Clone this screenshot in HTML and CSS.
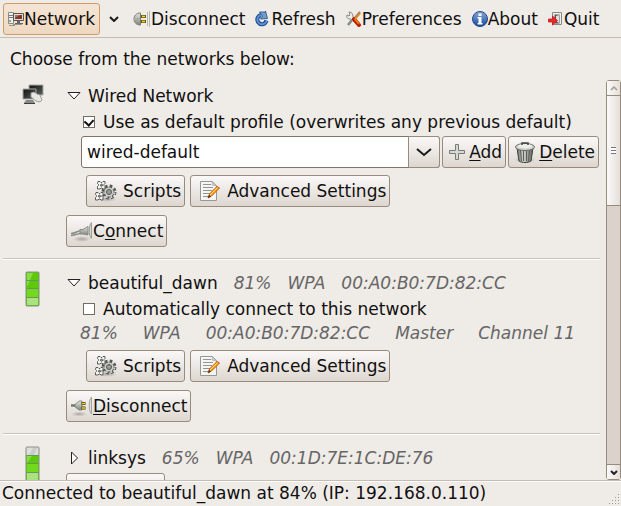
FILE: index.html
```html
<!DOCTYPE html>
<html lang="en">
<head>
    <meta charset="UTF-8">
    <meta name="viewport" content="width=device-width, initial-scale=1.0">
    <title>Network Manager</title>
    <link rel="stylesheet" href="styles.css">
</head>
<body>
    <!-- shared icons -->
    <svg class="defs" width="0" height="0" aria-hidden="true">
        <defs>
            <linearGradient id="metal" x1="0" y1="0" x2="0" y2="1">
                <stop offset="0" stop-color="#e2e4e0"/><stop offset="1" stop-color="#80857f"/>
            </linearGradient>
            <linearGradient id="blue" x1="0" y1="0" x2="0" y2="1">
                <stop offset="0" stop-color="#86a9dc"/><stop offset="1" stop-color="#174a9b"/>
            </linearGradient>
            <linearGradient id="screen" x1="0" y1="0" x2="1" y2="1">
                <stop offset="0" stop-color="#111"/><stop offset="1" stop-color="#59615a"/>
            </linearGradient>
            <linearGradient id="can" x1="0" y1="0" x2="1" y2="0">
                <stop offset="0" stop-color="#6c6f6a"/><stop offset=".4" stop-color="#d3d7cf"/><stop offset="1" stop-color="#5d605b"/>
            </linearGradient>
            <radialGradient id="shadow">
                <stop offset="0" stop-color="#000" stop-opacity=".25"/><stop offset="1" stop-color="#000" stop-opacity="0"/>
            </radialGradient>
            <symbol id="gears" viewBox="0 0 22 22">
                <ellipse cx="12" cy="19" rx="10" ry="3" fill="url(#shadow)"/>
                <circle cx="14" cy="12" r="6" fill="none" stroke="#555753" stroke-width="3" stroke-dasharray="2.6 2.1"/>
                <circle cx="14" cy="12" r="5.500" fill="#555753"/>
                <circle cx="14" cy="12" r="5.500" fill="none" stroke="#d3d6d0" stroke-width="2" stroke-dasharray="1.6 3.1" stroke-dashoffset="-.5"/>
                <circle cx="14" cy="12" r="4.600" fill="#cdd0ca"/>
                <circle cx="14" cy="12" r="2.500" fill="#9a9d97" stroke="#555753"/>
                <g id="cog">
                    <path d="M3 1.500h2l1 1h1l1-1h2v2l-1 1v1l1 1v2.500H8l-1-1H6l-1 1H2.500V6.500l1-1v-1l-1-1z" fill="#f3f4f2" stroke="#5a5c57"/>
                    <circle cx="6.500" cy="5.200" r="1" fill="#aaa" stroke="#4c4e49"/>
                </g>
                <use href="#cog" x="-2" y="11"/>
            </symbol>
            <symbol id="edit" viewBox="0 0 22 22">
                <path d="M1.500 1.500h12l4 4v15h-16z" fill="#f5f6f4" stroke="#969892"/>
                <path d="M13.500 1.500l4 4.500-4.500-1z" fill="#cfd2cc" stroke="#a5a8a1" stroke-width=".7"/>
                <path d="M4 4.500h8M4 7.500h10M4 10.500h9M4 13.500h7M4 16.500h5" stroke="#92958f"/>
                <path d="M18 6.500l2.500 1.500-8 8-3.500 2 1.500-4z" fill="#fca21e" stroke="#c55408"/>
                <path d="M18.500 7.500l-7.500 7.500" stroke="#ffe36c"/>
                <path d="M9 18l1-3 2 1.500z" fill="#2e3436"/>
            </symbol>
            <symbol id="plug" viewBox="0 0 22 22">
                <ellipse cx="8" cy="19" rx="8" ry="2.500" fill="url(#shadow)"/>
                <path d="M0 10.500h6" stroke="#737772" stroke-width="2.500"/>
                <path d="M4 9.500l4-3.500h3v9H8l-4-3z" fill="url(#metal)" stroke="#777b76" stroke-width=".8"/>
                <path d="M10.500 8.500h4M10.500 13h4" stroke="#514200" stroke-width="3"/>
                <path d="M11 8.500h3M11 13h3" stroke="#e9ce35" stroke-width="1.500"/>
                <path d="M20.500 2c-3 3-3 14 0 17z" fill="#dfe1dd" stroke="#a0a5a0"/>
            </symbol>
            <symbol id="connect" viewBox="0 0 22 22">
                <ellipse cx="11" cy="19" rx="9" ry="3" fill="url(#shadow)"/>
                <path d="M0 13.500c5 0 6-3 11-3M0 15.500c5-.5 7-2 11-2.500" fill="none" stroke="#888c86" stroke-width="1.500"/>
                <path d="M9 9.500h3l5-3v8.500l-5-1H9z" fill="url(#metal)" stroke="#858a85"/>
                <path d="M20.500 2.500c-3 3-3 13 0 16z" fill="#d5d8d2" stroke="#999e98"/>
            </symbol>
        </defs>
    </svg>

    <nav class="toolbar">
        <button class="tool active">
            <svg width="16" height="16" viewBox="0 0 16 16">
                <path d="M.5 1.500h5v11h-5z" fill="#eeeeec" stroke="#888a85"/>
                <path d="M1 4.500h4M1 6.500h4" stroke="#777"/>
                <path d="M5.500 2.500h10v7h-10z" fill="#ddd" stroke="#555"/>
                <path d="M7 4h7v4H7z" fill="#7f3827"/><path d="M7 4h5l-5 3z" fill="#b16b55"/>
                <path d="M9 10h3v2h3v1H7v-1h2z" fill="#666"/><path d="M5 13.500h9M1 14.500h6" stroke="#92958f"/>
                <circle cx="2" cy="10" r="1" fill="#69a745"/>
            </svg>Network</button>
        <button class="drop" aria-label="Choose network">
            <svg width="10" height="6" viewBox="0 0 10 6"><path d="M1 1l4 4 4-4" fill="none" stroke="#1a1a1a" stroke-width="2"/></svg>
        </button>
        <button class="tool">
            <svg width="18" height="16" viewBox="0 0 18 16">
                <path d="M7.500 2v12C3 14 1 11 1 8s2-6 6.500-6z" fill="url(#metal)" stroke="#777b76"/>
                <path d="M1 8h6" stroke="#aaada7" stroke-width="2"/>
                <path d="M8 5.500h5M8 10.500h5" stroke="#6a5900" stroke-width="3"/>
                <path d="M9 5.500h3M9 10.500h3" stroke="#edd336" stroke-width="1.500"/>
                <path d="M14.500 1v14M16.500 0v16" stroke="#b4b8b3"/>
            </svg>Disconnect</button>
        <button class="tool">
            <svg width="16" height="16" viewBox="0 0 16 16">
                <path d="M6 4C2.500 5 1.500 8 3 11c2.500 3.500 7 3 8.500-1.500" fill="none" stroke="#174a91" stroke-width="4"/>
                <path d="M6 4C2.500 5 1.500 8 3 11c2.500 3.500 7 3 8.500-1" fill="none" stroke="#5e91d2" stroke-width="2"/>
                <path d="M4.500 1h6V0l2 7.500-7 .5 2-2.500z" fill="#739cce" stroke="#204a87" stroke-width=".8"/>
            </svg>Refresh</button>
        <button class="tool">
            <svg width="16" height="16" viewBox="0 0 16 16">
                <path d="M3 1l1 3-1 1-2-1c-1 3 1 4 4 4l6 6 2 1 1-2-7-7c0-3-1-5-4-5z" fill="#eeeeec" stroke="#888a85"/>
                <path d="M14 1L8 8" stroke="#777b76" stroke-width="2"/>
                <path d="M6 9l-4 5" stroke="#888a85" stroke-width="2.500"/>
                <path d="M8 8l5 6" stroke="#b8200a" stroke-width="4" stroke-linecap="round"/>
                <path d="M9 8l4 5" stroke="#f57900" stroke-width="2"/>
                <path d="M9 8l5-6" stroke="#e78523" stroke-width="2"/>
            </svg>Preferences</button>
        <button class="tool">
            <svg width="16" height="16" viewBox="0 0 16 16">
                <circle cx="8" cy="8" r="7.500" fill="url(#blue)" stroke="#204a87"/>
                <path d="M6.500 2.500h3v2.500h-3zM5.500 6h4v6h1v1.500h-5V12h1V7.500h-1z" fill="#fff"/>
            </svg>About</button>
        <button class="tool">
            <svg width="16" height="16" viewBox="0 0 16 16">
                <path d="M4.500 1.500h9v12h-9z" fill="#eee" stroke="#888a85"/>
                <path d="M6.500 3.500h5v9h-5z" fill="#555753"/><path d="M8 5l3-1v8l-3-2z" fill="#ddd"/>
                <path d="M.5 8h4V5l5 4.500-5 4.500v-3h-4z" fill="#ef2929" stroke="#c41a1a" stroke-width=".8"/>
            </svg>Quit</button>
    </nav>

    <p class="intro">Choose from the networks below:</p>

    <main class="browser">
        <div class="networks">
            <section class="network">
                <svg class="status" width="22" height="22" viewBox="0 0 22 22">
                    <path d="M7 1h14v10H7z" fill="url(#screen)" stroke="#a6a9a4"/>
                    <path d="M1 5h13v10H1z" fill="url(#screen)" stroke="#a6a9a4"/>
                    <path d="M4 16h7l2 3H2z" fill="#888a85"/><path d="M2 19.500h11" stroke="#3d403c"/>
                    <path d="M9 9l3-1 3 2 3 1 2 5-2 2-4-1-5-4z" fill="#e6e8e3" stroke="#9b9e98"/>
                </svg>
                <div class="body">
                    <button class="expander">
                        <svg width="14" height="8" viewBox="0 0 14 8"><path d="M1 .5h12L7 7z" fill="#fff" stroke="#222"/></svg>
                        <span class="name">Wired Network</span>
                    </button>
                    <label class="check"><input type="checkbox" checked>Use as default profile (overwrites any previous default)</label>
                    <div class="profile">
                        <div class="combo">
                            <select aria-label="Profile"><option>wired-default</option></select>
                            <span class="arrow"><svg width="16" height="9" viewBox="0 0 16 9"><path d="M1 1l7 6 7-6" fill="none" stroke="#1a1a1a" stroke-width="2"/></svg></span>
                        </div>
                        <button class="btn">
                            <svg width="18" height="18" viewBox="0 0 18 18"><path d="M7.500 1.500h3v6h6v3h-6v6h-3v-6h-6v-3h6z" fill="#d6d9d3" stroke="#777b76"/></svg>
                            <span><u>A</u>dd</span></button>
                        <button class="btn">
                            <svg width="22" height="22" viewBox="0 0 22 22">
                                <ellipse cx="11" cy="19" rx="11" ry="3" fill="url(#shadow)"/>
                                <path d="M3 7l2 13c3 2 9 2 12 0l2-13z" fill="url(#can)" stroke="#3d403c"/>
                                <path d="M6.500 9l1 11M9.500 10v10M12.500 10v10M15.500 9l-1 11" stroke="#5b5e59"/>
                                <ellipse cx="11" cy="6" rx="9.500" ry="3.500" fill="#d3d7cf" stroke="#666963"/>
                                <ellipse cx="11" cy="5" rx="7" ry="2" fill="#eeeeec"/>
                                <path d="M8 4V2h6v2" fill="none" stroke="#42453f" stroke-width="1.500"/>
                            </svg>
                            <span><u>D</u>elete</span></button>
                    </div>
                    <div class="options">
                        <button class="btn"><svg width="22" height="22"><use href="#gears"/></svg>Scripts</button>
                        <button class="btn"><svg width="22" height="22"><use href="#edit"/></svg>Advanced Settings</button>
                    </div>
                    <button class="btn link"><svg width="22" height="22"><use href="#connect"/></svg><span>C<u>o</u>nnect</span></button>
                </div>
            </section>

            <section class="network">
                <svg class="status" width="16" height="36" viewBox="0 0 16 36">
                    <path d="M1 1h13v34H1z" fill="#5cc90a"/><path d="M2 2h6L2 16z" fill="#87df45"/>
                    <path d="M2 18h11v8H2z" fill="#73d91f"/><path d="M2 27h11v7H2z" fill="#aae37d"/>
                    <path d="M1 9.500h13M1 17.500h13M1 26.500h13" stroke="#69965a"/>
                    <rect x="1" y="1" width="13" height="34" rx="1" fill="none" stroke="#84917e"/>
                </svg>
                <div class="body">
                    <button class="expander">
                        <svg width="14" height="8" viewBox="0 0 14 8"><path d="M1 .5h12L7 7z" fill="#fff" stroke="#222"/></svg>
                        <span class="name">beautiful_dawn</span>
                        <i>81%</i><i>WPA</i><i>00:A0:B0:7D:82:CC</i>
                    </button>
                    <label class="check"><input type="checkbox">Automatically connect to this network</label>
                    <div class="details"><i>81%</i><i>WPA</i><i>00:A0:B0:7D:82:CC</i><i>Master</i><i>Channel 11</i></div>
                    <div class="options">
                        <button class="btn"><svg width="22" height="22"><use href="#gears"/></svg>Scripts</button>
                        <button class="btn"><svg width="22" height="22"><use href="#edit"/></svg>Advanced Settings</button>
                    </div>
                    <button class="btn link"><svg width="22" height="22"><use href="#plug"/></svg><span><u>D</u>isconnect</span></button>
                </div>
            </section>

            <section class="network">
                <svg class="status" width="16" height="36" viewBox="0 0 16 36">
                    <path d="M1 1h13v34H1z" fill="#5cc90a"/><path d="M1 1h13v8H1z" fill="#dcdedc"/><path d="M8 2h4l-3 7H4z" fill="#c9ccc9"/>
                    <path d="M2 10h5l-5 7z" fill="#87df45"/>
                    <path d="M2 18h11v8H2z" fill="#73d91f"/><path d="M2 27h11v7H2z" fill="#aae37d"/>
                    <path d="M1 9.500h13M1 17.500h13M1 26.500h13" stroke="#69965a"/>
                    <rect x="1" y="1" width="13" height="34" rx="1" fill="none" stroke="#84917e"/>
                </svg>
                <div class="body">
                    <button class="expander">
                        <svg width="14" height="14" viewBox="0 0 14 14"><path d="M4.500 1v12l6-6z" fill="#fff" stroke="#222"/></svg>
                        <span class="name">linksys</span>
                        <i>65%</i><i>WPA</i><i>00:1D:7E:1C:DE:76</i>
                    </button>
                    <button class="btn link" aria-label="Connect"><svg width="90" height="22"><use href="#connect" width="22" height="22"/></svg></button>
                </div>
            </section>
        </div>

        <div class="scrollbar">
            <button class="step" aria-label="Scroll up"><svg width="8" height="5" viewBox="0 0 8 5"><path d="M1 4l3-3 3 3" fill="none" stroke="#a59d94" stroke-width="1.500"/></svg></button>
            <div class="thumb"><span class="grip"></span></div>
            <div class="trough"></div>
            <button class="step" aria-label="Scroll down"><svg width="8" height="5" viewBox="0 0 8 5"><path d="M1 1l3 3 3-3" fill="none" stroke="#222" stroke-width="2"/></svg></button>
        </div>
    </main>

    <footer class="statusbar">
        <span>Connected to beautiful_dawn at 84% (IP: 192.168.0.110)</span>
        <svg width="12" height="12" viewBox="0 0 12 12"><path d="M10 1.500h1M7 4.500h1M10 4.500h1M4 7.500h1M7 7.500h1M10 7.500h1M1 10.500h1M4 10.500h1M7 10.500h1M10 10.500h1" stroke="#a59a90"/></svg>
    </footer>
</body>
</html>
```
FILE: styles.css
```css
* {box-sizing: border-box; margin: 0; padding: 0;}
body {display: flex; flex-direction: column; height: 100vh; overflow: hidden; background: #efebe7; color: #101010; font: 17px/20px "DejaVu Sans", sans-serif;}
button, select {font: inherit; color: inherit;}
button {background: none; border: 0; white-space: nowrap;}
svg {flex: none;}
u {text-underline-offset: 2px; text-decoration-thickness: 1px;}
.defs {position: absolute;}

.toolbar {display: flex; align-items: center; height: 38px; padding: 0 3px; border-bottom: 1px solid #c7bab0;}
.tool {display: flex; align-items: center; height: 32px; padding: 0 5px;}
.tool.active {background: linear-gradient(#f5e5d6, #efd8c0); border: 1px solid #cf9b67; border-radius: 3px; padding: 0 4px;}
.drop {display: flex; padding: 8px 9px;}

.intro {padding: 11px 10px;}

.browser {display: flex; flex: 1; min-height: 0;}
.networks {flex: 1; min-width: 0; overflow: hidden; padding: 0 6px 0 3px;}
.network {display: flex; border-bottom: 1px solid #c8c2bb; box-shadow: 0 1px #fff;}
.network + .network {padding-top: 8px;}
.status {width: 60px; margin: 4px 3px 0 0;}
.body {flex: 1; min-width: 0; padding-bottom: 11px;}
.expander {display: flex; align-items: center; gap: 16px; height: 32px; padding-left: 1px;}
.expander .name {margin-left: -9px;}
i {color: #666;}
.check {display: flex; align-items: center; gap: 8px; height: 20px; margin-left: 17px; white-space: nowrap;}
.check input {display: flex; appearance: none; width: 12px; height: 12px; background: #fff; border: 1px solid #756b62;}
.check input:checked::before {content: ""; width: 8px; height: 5px; margin: 1px; border: solid #111; border-width: 0 0 2px 2px; transform: rotate(-48deg);}
.profile {display: flex; gap: 2px; margin: 4px 1px 0 15px;}
.combo {position: relative; flex: 1; min-width: 0;}
.combo select {display: block; appearance: none; width: 100%; height: 32px; padding: 0 36px 0 5px; background: #fff; border: 1px solid #827568; border-radius: 3px;}
.combo .arrow {position: absolute; top: 0; right: 0; display: flex; align-items: center; justify-content: center; width: 32px; height: 32px; background: linear-gradient(#faf8f7, #ded7d0); border: 1px solid #978b7e; border-radius: 0 3px 3px 0; pointer-events: none;}
.btn {display: flex; align-items: center; gap: 6px; height: 32px; padding: 0 3px 0 8px; background: linear-gradient(#faf8f7, #ece7e3 50%, #ded7d0); border: 1px solid #978b7e; border-radius: 3px;}
.profile .btn {gap: 3px; padding: 0 3px 0 5px;}
.options {display: flex; gap: 5px; margin: 7px 0 0 20px;}
.details {display: flex; gap: 25px; height: 20px; margin: 4px 0 0 14px; white-space: nowrap;}
.link {gap: 0; margin-top: 8px; padding: 0 3px 0 4px;}
.network:last-child .link {margin-top: -1px;}

.scrollbar {display: flex; flex-direction: column; width: 15px; background: #dbd2cc; border: 1px solid #978b7e; border-radius: 3px;}
.step {display: flex; align-items: center; justify-content: center; height: 14px; background: linear-gradient(90deg, #fbfaf9, #e4ded9);}
.thumb {display: flex; align-items: center; justify-content: center; flex: 110; background: linear-gradient(90deg, #fbfaf9, #e4ded9); border: solid #978b7e; border-width: 1px 0;}
.grip {width: 5px; height: 7px; background: repeating-linear-gradient(#777 0 1px, #fff 1px 3px);}
.trough {flex: 260; border-bottom: 1px solid #978b7e;}

.statusbar {display: flex; align-items: flex-end; justify-content: space-between; height: 26px; padding: 0 1px 1px 2px; border-top: 1px solid #c7bab0; box-shadow: inset 0 1px #fff;}
.statusbar span {padding-bottom: 2px;}
```
